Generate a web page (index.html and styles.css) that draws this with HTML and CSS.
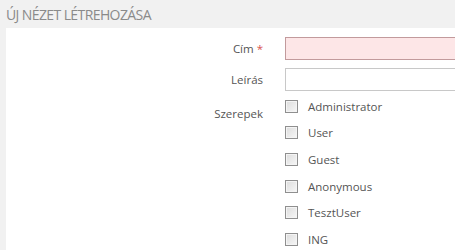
FILE: index.html
```html
<!DOCTYPE html>
<html lang="hu">
<head>
<meta charset="utf-8">
<link rel="stylesheet" href="styles.css">
</head>
<body>
<h1 class="title">ÚJ NÉZET LÉTREHOZÁSA</h1>
<div class="panel">
  <form class="form">
    <label class="label">Cím <span class="req">*</span></label>
    <div class="control"><input class="input input-error" type="text"></div>
    <label class="label">Leírás</label>
    <div class="control"><input class="input" type="text"></div>
    <label class="label label-top">Szerepek</label>
    <div class="roles">
      <label class="role"><span class="cb"></span><span>Administrator</span></label>
      <label class="role"><span class="cb"></span><span>User</span></label>
      <label class="role"><span class="cb"></span><span>Guest</span></label>
      <label class="role"><span class="cb"></span><span>Anonymous</span></label>
      <label class="role"><span class="cb"></span><span>TesztUser</span></label>
      <label class="role"><span class="cb"></span><span>ING</span></label>
    </div>
  </form>
</div>
</body>
</html>
```
FILE: styles.css
```css
html, body {
  margin: 0;
  padding: 0;
  background: #f1f1f1;
  overflow: hidden;
  height: 250px;
}
body {
  font-family: "Open Sans", "DejaVu Sans", sans-serif;
  color: #555;
}
.title {
  margin: 0;
  padding: 5px 0 0 6px;
  height: 28px;
  box-sizing: border-box;
  font-size: 14px;
  font-weight: 400;
  color: #8a8a8a;
  line-height: 20px;
  letter-spacing: -0.6px;
}
.panel {
  margin-left: 6px;
  background: #fff;
  height: 222px;
  padding-top: 9px;
  box-sizing: border-box;
}
.form {
  display: grid;
  grid-template-columns: 257px 300px;
  column-gap: 22px;
  row-gap: 8px;
  align-items: center;
}
.label {
  text-align: right;
  font-size: 11.5px;
  color: #555;
}
.label-top {
  align-self: start;
  padding-top: 7px;
}
.req {
  color: #d9534f;
}
.input {
  display: block;
  width: 300px;
  height: 23px;
  box-sizing: border-box;
  border: 1px solid #c8c8c8;
  background: #fff;
  margin: 0;
  padding: 0 4px;
  font-family: inherit;
}
.input-error {
  background: #fde6e7;
  border-color: #c29a9c;
}
.roles {
  display: flex;
  flex-direction: column;
  margin-top: -6px;
}
.role {
  display: flex;
  align-items: center;
  height: 26.6px;
  font-size: 11.5px;
  color: #555;
}
.cb {
  width: 13px;
  height: 13px;
  box-sizing: border-box;
  border: 1px solid #8f8f8f;
  background: linear-gradient(135deg, #dcdcdc, #f7f7f7);
  box-shadow: inset 0 0 0 1px #f4f4f4;
  margin-right: 10px;
  flex: none;
}
```
